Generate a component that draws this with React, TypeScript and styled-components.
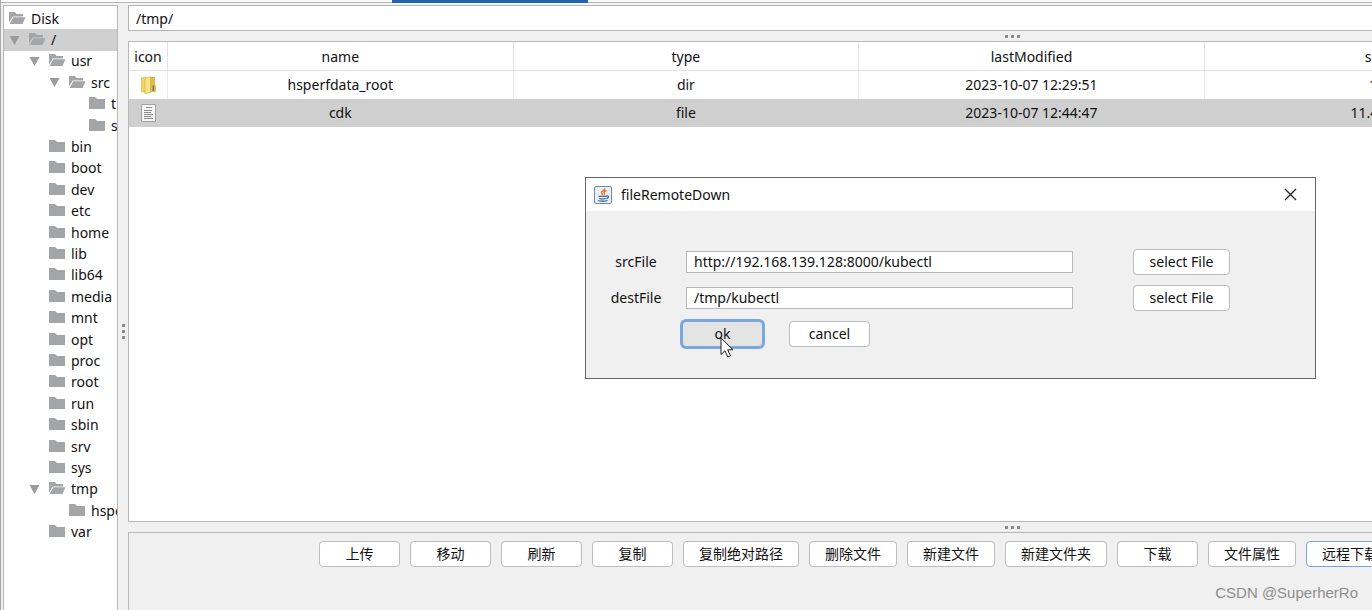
import React from "react";
import styled, { createGlobalStyle, css } from "styled-components";

const GlobalStyle = createGlobalStyle`
  * { box-sizing: border-box; }
  body {
    margin: 0;
    overflow: hidden;
    background: #f0f0f0;
    color: #111;
    font: 14px/20px "Noto Sans", "Noto Sans CJK SC", sans-serif;
  }
  button, input { font: inherit; color: inherit; }
`;

const Shell = styled.div`
  position: relative;
  display: flex;
  flex-direction: column;
  height: 100vh;
  overflow: hidden;
  border-left: 1px solid #a8a8a8;
`;

const TabStrip = styled.div`
  flex: none;
  height: 5px;
  padding-left: 391px;
  background: linear-gradient(#fafafa 2px, #b4b4b4 2px, #b4b4b4 3px, #f4f4f4 3px);
`;

const ActiveTab = styled.div`
  width: 196px;
  height: 3px;
  background: #2463ad;
`;

const Workspace = styled.div`
  flex: 1;
  display: flex;
  min-height: 0;
  padding-left: 2px;
`;

const Sidebar = styled.nav`
  flex: none;
  width: 115px;
  overflow: hidden;
  background: #fff;
  border: 1px solid #b8b8b8;
  border-bottom: 0;
`;

const Tree = styled.ul`
  display: grid;
  grid-auto-rows: 1fr;
  height: 535px;
  margin: 2px 0 0;
  padding: 0;
  list-style: none;
`;

const TreeRow = styled.li<{ $level: number; $selected?: boolean }>`
  display: flex;
  align-items: center;
  padding-left: ${(p) => 5 + Math.max(0, p.$level - 1) * 20}px;
  white-space: nowrap;
  background: ${(p) => (p.$selected ? "#cfcfcf" : "transparent")};
`;

const ArrowSlot = styled.span`
  display: flex;
  flex: none;
  width: 20px;
`;

const TreeIcon = styled.span`
  display: flex;
  flex: none;
  width: 22px;
  padding-bottom: 2px;
`;

const Splitter = styled.div<{ $vertical?: boolean }>`
  flex: none;
  display: flex;
  gap: 3px;
  ${(p) =>
    p.$vertical
      ? css`
          flex-direction: column;
          align-items: center;
          width: 10px;
          padding-top: 319px;
        `
      : css`
          align-items: center;
          justify-content: center;
          height: 10px;
        `}
`;

const Dot = styled.i`
  width: 3px;
  height: 3px;
  background: #8c8c8c;
`;

const Main = styled.main`
  flex: 1;
  display: flex;
  flex-direction: column;
  min-width: 1769px;
`;

const PathInput = styled.input`
  flex: none;
  height: 26px;
  padding: 0 7px;
  background: #fff;
  border: 1px solid #b4b4b4;
  outline: 0;
`;

const TablePanel = styled.section`
  flex: 1;
  min-height: 0;
  background: #fff;
  border: 1px solid #b8b8b8;
`;

const FileTable = styled.table`
  width: 100%;
  table-layout: fixed;
  border-collapse: separate;
  border-spacing: 0;
`;

const IconCol = styled.col`
  width: 39px;
`;

const Cell = styled.td`
  height: 28px;
  padding: 0;
  text-align: center;
  border-right: 1px solid #ececec;
  svg { display: block; margin: 0 auto; }
`;

const HeadCell = styled(Cell).attrs({ as: "th" })`
  height: 29px;
  padding-top: 1px;
  font-weight: 400;
  border-right-color: #e2e2e2;
  border-bottom: 1px solid #e2e2e2;
`;

const FileRow = styled.tr<{ $selected?: boolean }>`
  ${(p) =>
    p.$selected &&
    css`
      background: #cfcfcf;
      ${Cell} { border-right-color: #cfcfcf; }
    `}
`;

const Actions = styled.footer`
  flex: none;
  display: flex;
  align-items: flex-start;
  gap: 10px;
  height: 78px;
  padding: 8px 0 0 190px;
  border: 1px solid #b8b8b8;
  border-bottom: 0;
`;

const Button = styled.button<{ $active?: boolean }>`
  height: 26px;
  min-width: 81px;
  padding: 0 15px;
  line-height: 20px;
  white-space: nowrap;
  background: #fff;
  border: 1px solid ${(p) => (p.$active ? "#7ba3dc" : "#bdbdbd")};
  border-radius: 4px;
`;

const SelectButton = styled(Button)`
  width: 97px;
`;

const FocusedButton = styled(Button)`
  background: #e4e4e4;
  border-color: #7ba7dd;
  box-shadow: 0 0 0 2px #7ba7dd;
  outline: 0;
`;

const Dialog = styled.section`
  position: absolute;
  top: 177px;
  left: 584px;
  width: 731px;
  height: 202px;
  background: #f0f0f0;
  border: 1px solid #666;
`;

const TitleBar = styled.header`
  display: flex;
  align-items: center;
  height: 33px;
  padding: 0 18px 0 8px;
  background: #fff;
`;

const Title = styled.h1`
  flex: 1;
  margin: 0;
  padding-left: 9px;
  font-size: 14px;
  font-weight: 400;
`;

const CloseButton = styled.button`
  display: flex;
  padding: 0;
  background: none;
  border: 0;
`;

const Form = styled.form`
  display: flex;
  flex-direction: column;
  gap: 10px;
  padding: 38px 85px 0 0;
`;

const FormRow = styled.div`
  display: flex;
  align-items: center;
  height: 26px;
`;

const Label = styled.label`
  width: 100px;
  text-align: center;
`;

const Field = styled.input`
  flex: 1;
  height: 22px;
  margin-right: 60px;
  padding: 0 7px 2px;
  background: #fff;
  border: 1px solid #b8b8b8;
  outline: 0;
`;

const FormButtons = styled(FormRow)`
  gap: 26px;
  padding-left: 96px;
`;

const Pointer = styled.svg`
  position: absolute;
  top: 337px;
  left: 719px;
`;

const Watermark = styled.div`
  position: absolute;
  right: 14px;
  bottom: 7px;
  color: #8e8e8e;
  font: 15px/20px "Liberation Sans", sans-serif;
`;

const Arrow = () => (
  <svg width="11" height="9" viewBox="0 0 11 9">
    <path d="M.5 0h10L5.500 9z" fill="#9b9b9b" />
  </svg>
);

const ClosedFolder = () => (
  <svg width="16" height="12" viewBox="0 0 16 12">
    <path d="M0 0h6l2 2h8v10H0z" fill="#a3a5a6" />
  </svg>
);

const OpenFolder = () => (
  <svg width="17" height="12" viewBox="0 0 17 12">
    <path d="M0 0h6l1.500 2H14v2.500H3.800L0 10.500z" fill="#a3a5a6" />
    <path d="M4.300 5.300H16.500L13.500 12H.500z" fill="#a3a5a6" />
  </svg>
);

const YellowFolder = () => (
  <svg width="15" height="18" viewBox="0 0 15 18">
    <path d="M.5 2l4-1v15.500l-4-1z" fill="#f2d568" stroke="#d2ae3a" strokeWidth=".6" />
    <path d="M9 1.500h4.500v6.500l1 1v6.500H9z" fill="#e6bd43" stroke="#c99d2a" strokeWidth=".6" />
    <path d="M4 2.300L9.500.700v15.500L4 17.700z" fill="#f9e28a" stroke="#d2ae3a" strokeWidth=".6" />
    <path d="M12.300 9.500v5.500" stroke="#4f7d8c" strokeWidth="1.500" />
  </svg>
);

const TextFile = () => (
  <svg width="15" height="18" viewBox="0 0 15 18">
    <path d="M.5.5h14v17H.5z" fill="#f6f6f6" stroke="#a2a2a2" />
    <path d="M5 3.500h6M3 6.500h8M3 8.500h7M3 10.500h9M3 12.500h7M3 14.500h9" stroke="#8c8c8c" />
  </svg>
);

const JavaIcon = () => (
  <svg width="18" height="18" viewBox="0 0 18 18">
    <rect x=".5" y=".5" width="17" height="17" rx="1.500" fill="#e9eff4" stroke="#71899e" />
    <path d="M10.500 2.200c1 2.300-4.200 3-2.700 5 .6.700.7 1.100.4 1.800M12.500 4.500c-3 1-2.600 2-2 2.800.5.700 0 1.200-.5 1.700" fill="none" stroke="#e8762d" strokeWidth="1.500" />
    <path d="M4.500 10.300h8M5.200 12.300c1.800.6 4.600.6 6.400 0M12.500 10c2.800-.6 2.600 2-.3 2.600M4 14.500c2.500 1 7.500 1 9.500 0" fill="none" stroke="#436f96" strokeWidth="1.300" />
  </svg>
);

const CloseIcon = () => (
  <svg width="13" height="13" viewBox="0 0 13 13">
    <path d="M1 1l11 11M12 1L1 12" stroke="#222" strokeWidth="1.300" />
  </svg>
);

type TreeNode = { name: string; level: number; open?: boolean; selected?: boolean };

const tree: TreeNode[] = [
  { name: "Disk", level: 0, open: true },
  { name: "/", level: 1, open: true, selected: true },
  { name: "usr", level: 2, open: true },
  { name: "src", level: 3, open: true },
  { name: "t", level: 4 },
  { name: "s", level: 4 },
  ...["bin", "boot", "dev", "etc", "home", "lib", "lib64", "media", "mnt", "opt", "proc", "root", "run", "sbin", "srv", "sys"].map(
    (name) => ({ name, level: 2 })
  ),
  { name: "tmp", level: 2, open: true },
  { name: "hsperfdata_root", level: 3 },
  { name: "var", level: 2 },
];

const files = [
  { icon: <YellowFolder />, name: "hsperfdata_root", type: "dir", modified: "2023-10-07 12:29:51", size: "17" },
  { icon: <TextFile />, name: "cdk", type: "file", modified: "2023-10-07 12:44:47", size: "11.4 MB", selected: true },
];

const actions = ["上传", "移动", "刷新", "复制", "复制绝对路径", "删除文件", "新建文件", "新建文件夹", "下载", "文件属性", "远程下载"];

const Grip = ({ vertical }: { vertical?: boolean }) => (
  <Splitter $vertical={vertical}>
    <Dot />
    <Dot />
    <Dot />
  </Splitter>
);

export default function App() {
  return (
    <>
      <GlobalStyle />
      <Shell>
        <TabStrip>
          <ActiveTab />
        </TabStrip>
        <Workspace>
          <Sidebar>
            <Tree>
              {tree.map((node, i) => (
                <TreeRow key={i} $level={node.level} $selected={node.selected}>
                  {node.level > 0 && <ArrowSlot>{node.open && <Arrow />}</ArrowSlot>}
                  <TreeIcon>{node.open ? <OpenFolder /> : <ClosedFolder />}</TreeIcon>
                  {node.name}
                </TreeRow>
              ))}
            </Tree>
          </Sidebar>
          <Grip vertical />
          <Main>
            <PathInput aria-label="path" defaultValue="/tmp/" />
            <Grip />
            <TablePanel>
              <FileTable>
                <colgroup>
                  <IconCol />
                  <col />
                  <col />
                  <col />
                  <col />
                  <col />
                </colgroup>
                <thead>
                  <tr>
                    {["icon", "name", "type", "lastModified", "size", ""].map((h) => (
                      <HeadCell key={h}>{h}</HeadCell>
                    ))}
                  </tr>
                </thead>
                <tbody>
                  {files.map((f) => (
                    <FileRow key={f.name} $selected={f.selected}>
                      <Cell>{f.icon}</Cell>
                      <Cell>{f.name}</Cell>
                      <Cell>{f.type}</Cell>
                      <Cell>{f.modified}</Cell>
                      <Cell>{f.size}</Cell>
                      <Cell />
                    </FileRow>
                  ))}
                </tbody>
              </FileTable>
            </TablePanel>
            <Grip />
            <Actions>
              {actions.map((a) => (
                <Button key={a} type="button" $active={a === "远程下载"}>
                  {a}
                </Button>
              ))}
            </Actions>
          </Main>
        </Workspace>

        <Dialog role="dialog" aria-labelledby="dialog-title">
          <TitleBar>
            <JavaIcon />
            <Title id="dialog-title">fileRemoteDown</Title>
            <CloseButton type="button" aria-label="close">
              <CloseIcon />
            </CloseButton>
          </TitleBar>
          <Form onSubmit={(e) => e.preventDefault()}>
            <FormRow>
              <Label htmlFor="src">srcFile</Label>
              <Field id="src" defaultValue="http://192.168.139.128:8000/kubectl" />
              <SelectButton type="button">select File</SelectButton>
            </FormRow>
            <FormRow>
              <Label htmlFor="dest">destFile</Label>
              <Field id="dest" defaultValue="/tmp/kubectl" />
              <SelectButton type="button">select File</SelectButton>
            </FormRow>
            <FormButtons>
              <FocusedButton type="submit">ok</FocusedButton>
              <Button type="button">cancel</Button>
            </FormButtons>
          </Form>
        </Dialog>
        <Pointer width="14" height="22" viewBox="0 0 14 22">
          <path d="M1 1v16.500l4-3.700 2.800 6.200 2.700-1.200-2.800-6H13z" fill="#fff" stroke="#222" />
        </Pointer>
        <Watermark>CSDN @SuperherRo</Watermark>
      </Shell>
    </>
  );
}
